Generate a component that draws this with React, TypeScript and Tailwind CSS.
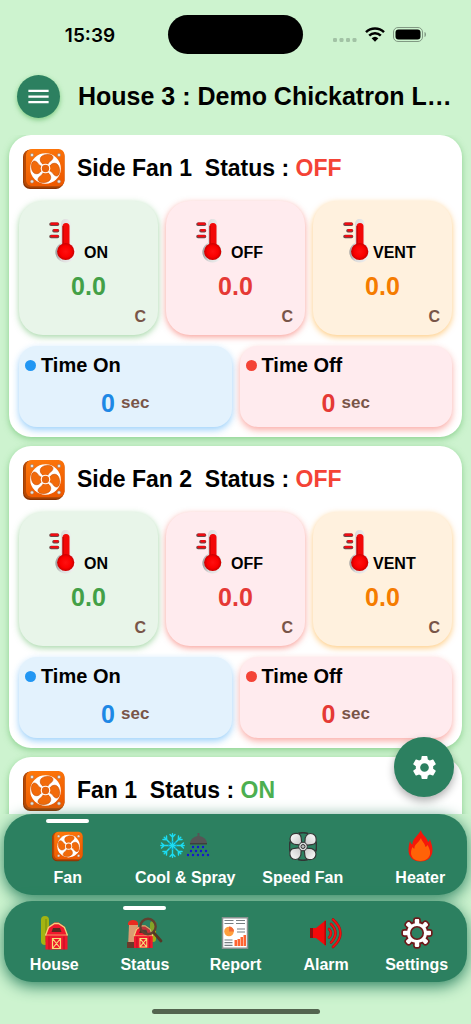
import type { ReactNode } from "react";
import { MdMenu, MdSettings } from "react-icons/md";

function FanIcon({ size }: { size: number }) {
  return (
    <svg width={size} height={size} viewBox="0 0 42 42" aria-hidden="true">
      <defs>
        <linearGradient id="fanFace" x1="0" y1="0" x2="0.3" y2="1">
          <stop offset="0" stopColor="#ff7a0c" />
          <stop offset="1" stopColor="#ee5a00" />
        </linearGradient>
      </defs>
      <rect x="0" y="2" width="40" height="39" rx="7" fill="#8a3403" />
      <rect x="0.5" y="1.5" width="41" height="38" rx="7" fill="#b84a05" />
      <rect x="3" y="1" width="38.5" height="37" rx="6" fill="url(#fanFace)" />
      <circle cx="22.5" cy="20.5" r="15.3" fill="#fff" />
      {[0, 90, 180, 270].map((deg) => (
        <path
          key={deg}
          transform={`rotate(${deg} 22.5 20.5)`}
          d="M21.500 17C17.500 15.500 16 11 18.500 8.500c2.500-2.300 8-2.800 10.500-1 2 1.800.5 4.200-1.500 5.500-1.800 1.200-2.500 2.500-3 4z"
          fill="#f26a0a"
          stroke="#c94f04"
          strokeWidth="0.7"
        />
      ))}
      <circle cx="22.5" cy="20.5" r="4.800" fill="#fff" />
      <circle cx="22.5" cy="20.5" r="3.700" fill="#e8640c" />
      {[[9, 7], [36, 7], [9, 33.5], [36, 33.5]].map(([x, y]) => (
        <circle key={`${x}-${y}`} cx={x} cy={y} r="1.700" fill="#e4e4e4" stroke="#a06a48" strokeWidth="0.500" />
      ))}
    </svg>
  );
}

function ThermometerIcon() {
  return (
    <svg width="27" height="44" viewBox="0 0 27 44" aria-hidden="true">
      <defs>
        <radialGradient id="bulb">
          <stop offset="0" stopColor="#ff1010" />
          <stop offset="0.650" stopColor="#fa0000" />
          <stop offset="1" stopColor="#c80000" />
        </radialGradient>
        <linearGradient id="glass">
          <stop offset="0" stopColor="#9a9a9a" />
          <stop offset="0.300" stopColor="#dcdcdc" />
          <stop offset="1" stopColor="#f4f4f4" />
        </linearGradient>
      </defs>
      <path d="M12 4.500a4.700 4.700 0 0 1 9.400 0v19.500a10.300 10.300 0 1 1-9.400 0z" fill="url(#glass)" />
      <rect x="13.500" y="4" width="7" height="27" rx="3.500" fill="#f20808" />
      <path d="M14 7v20" stroke="#b00000" strokeWidth="1" />
      <circle cx="16.700" cy="32.500" r="8.600" fill="url(#bulb)" />
      <g strokeLinecap="round">
        <path d="M2 5.200h6.500M5 11.700h3.500M2 17.500h6.500" stroke="#6b4a4a" strokeWidth="3.600" />
        <path d="M2.500 4.800h6M5.500 11.300h3M2.500 17.100h6" stroke="#f00b12" strokeWidth="2.400" />
      </g>
    </svg>
  );
}

function CoolSprayIcon() {
  const drops = [[33, 14], [38, 14], [43, 14], [31, 18], [36, 18], [41, 18], [46, 18], [28, 22], [33, 22], [38, 22], [43, 22], [48, 22]];
  return (
    <svg width="50" height="28" viewBox="0 0 50 28" aria-hidden="true">
      <g fill="none" stroke="#1bdcf2" strokeWidth="1.400" strokeLinecap="round">
        {[0, 45, 90, 135, 180, 225, 270, 315].map((deg) => (
          <path key={deg} transform={`rotate(${deg} 12.500 13.500)`} d="M12.500 13.500V1.800M10 2.500l2.500 2.800L15 2.500" />
        ))}
      </g>
      <circle cx="12.500" cy="13.500" r="3.800" fill="none" stroke="#0fa3bf" strokeWidth="1" />
      <path d="M37.500 1h2v3c4.500 1 7 3.500 7.500 7H30c.5-3.500 3-6 7.500-7z" fill="#555" />
      <path d="M30 11h17v1.500H30z" fill="#3e3e3e" />
      {drops.map(([x, y]) => (
        <circle key={`${x}-${y}`} cx={x} cy={y + 1} r="1.200" fill="#1515cf" />
      ))}
    </svg>
  );
}

function SpeedFanIcon() {
  return (
    <svg width="28" height="29" viewBox="0 0 28 29" aria-hidden="true">
      <defs>
        <linearGradient id="blade" x1="0" y1="0" x2="1" y2="1">
          <stop offset="0" stopColor="#ffffff" />
          <stop offset="1" stopColor="#c4c4c4" />
        </linearGradient>
      </defs>
      <path d="M9 1.500q5-1.500 10 0M9 27.500q5 1.500 10 0M1.200 9.500q-1.500 5 0 10M26.800 9.500q1.500 5 0 10" fill="none" stroke="#303534" strokeWidth="1.600" />
      {[0, 90, 180, 270].map((deg) => (
        <path
          key={deg}
          transform={`rotate(${deg} 14 14.500)`}
          d="M13 13.500L8.500 12.500C4.500 13 1 10.500 1 7 1 3 4 1.200 7.500 1.300c3 .1 4.500 1.700 4.700 4.700z"
          fill="url(#blade)"
          stroke="#343736"
          strokeWidth="1.200"
        />
      ))}
      <circle cx="14" cy="14.500" r="4.300" fill="#d9d9d9" stroke="#303030" strokeWidth="1" />
      <circle cx="14" cy="14.500" r="2" fill="#bbb" stroke="#333" strokeWidth="1" />
    </svg>
  );
}

function FlameIcon() {
  return (
    <svg width="25" height="32" viewBox="0 0 25 32" aria-hidden="true">
      <path
        d="M13 0c0 4 6 7 7 12 1-.5 1.500-1.500 2-3 .5 3 2.500 6 2.500 11 0 7-5 11.500-12 11.500S.5 27 .5 20.500C.5 17 1 14 2 11c.5 2 1 3 2.500 3.500C4 9 10 6 13 0z"
        fill="#f5170a"
      />
      <path
        d="M13 8c.5 3 3.500 4.500 4.500 9 .8-.5 1.500-1 2-2 1.500 3 3 5 2.500 9-.5 4-4.500 7-9.500 7S3 28 3 23c0-2.500.7-4.500 1.500-6 .5 1 1.200 1.500 2 1.500C6 14.500 11 12.500 13 8z"
        fill="#ff6207"
      />
    </svg>
  );
}

function Barn() {
  return (
    <>
      <path d="M0 14L3 4 9 0h4l6 4 3 10v13H0z" fill="#f0182d" />
      <path d="M3.500 14v13M18.500 14v13" stroke="#b80f22" strokeWidth="1" />
      <path d="M0 13L3 5l6-4h4l6 4 3 8" fill="none" stroke="#f3d27a" strokeWidth="1.300" />
      <path d="M6 9.500L7.500 5.500h7L16 9.500z" fill="#5b2a20" />
      <path d="M0 12.500h22" stroke="#f3d27a" strokeWidth="0.700" />
      <path d="M7 16h8v10H7zM7 16l8 10M15 16L7 26" fill="none" stroke="#f7df78" strokeWidth="1.200" />
    </>
  );
}

function HouseIcon() {
  return (
    <svg width="28" height="34" viewBox="0 0 28 34" aria-hidden="true">
      <rect x="1" y="0" width="8" height="29" rx="4" fill="#a3b412" />
      <path d="M6 3v23" stroke="#86990d" strokeWidth="1.500" />
      <g transform="translate(5.500 6.500)">
        <Barn />
      </g>
    </svg>
  );
}

function StatusIcon() {
  return (
    <svg width="36" height="32" viewBox="0 0 36 32" aria-hidden="true">
      <path d="M2 8h9v23H1z" fill="#dc9c72" />
      <path d="M1 6c1-4 9-4 10 0v2H1z" fill="#ea2b20" />
      <path d="M0 25h8v6H0z" fill="#6a3a2b" />
      <rect x="23" y="4" width="6" height="21" rx="3" fill="#a1b014" />
      <g transform="translate(7 8) scale(0.850)">
        <Barn />
      </g>
      <circle cx="21" cy="9.500" r="7.700" fill="#2c8060" fillOpacity="0.250" stroke="#60402f" strokeWidth="2.400" />
      <path d="M27 16l7 8" stroke="#563525" strokeWidth="2.800" strokeLinecap="round" />
    </svg>
  );
}

function ReportIcon() {
  return (
    <svg width="28" height="32" viewBox="0 0 28 32" aria-hidden="true">
      <rect x="1.500" y="0.800" width="25" height="30.400" fill="#fff" stroke="#8c9292" strokeWidth="1.500" />
      <path d="M3.500 3.500h9M3.500 6.500h9M15 3.500h9M15 6.500h9M16 12h8M16 15h8M3.500 23h8M3.500 25.700h8M3.500 28.400h8" stroke="#777f82" strokeWidth="1.200" />
      <circle cx="8" cy="14.500" r="4.800" fill="#ff9f3d" />
      <path d="M8 14.500v-5a5 5 0 0 1 5 5z" fill="#f36b37" />
      <path d="M13.500 29v-6H16v6zM16.500 29v-7H19v7zM19.500 29v-9H22v9zM22.500 29V18H25v11z" fill="#ff6430" />
    </svg>
  );
}

function AlarmIcon() {
  return (
    <svg width="34" height="32" viewBox="0 0 34 32" aria-hidden="true">
      <path d="M1 11h6L17 3v26L7 21H1z" fill="#f40a0a" />
      <path d="M1 11h3v10H1z" fill="#8d1010" />
      <path d="M16.200 4v24" stroke="#b40808" strokeWidth="1.500" />
      <g fill="none" strokeLinecap="round">
        <path d="M20 12q4 4 0 8.500M22 7q9 9 0 18.500M24 2.500q15 13.500 0 27.500" stroke="#9b1414" strokeWidth="2.600" />
        <path d="M20 12q4 4 0 8.500M22 7q9 9 0 18.500M24 2.500q15 13.500 0 27.500" stroke="#f51010" strokeWidth="1.700" />
      </g>
    </svg>
  );
}

function CogIcon() {
  const teeth = [0, 45, 90, 135, 180, 225, 270, 315];
  return (
    <svg width="32" height="32" viewBox="0 0 32 32" aria-hidden="true">
      <g fill="#fff" stroke="#6d1b1b" strokeWidth="1.800">
        {teeth.map((deg) => (
          <rect key={deg} x="13" y="1.200" width="6" height="8" rx="2.200" transform={`rotate(${deg} 16 16)`} />
        ))}
        <circle cx="16" cy="16" r="11" />
      </g>
      {teeth.map((deg) => (
        <rect key={deg} x="13.800" y="2" width="4.400" height="8" rx="1.400" fill="#fff" transform={`rotate(${deg} 16 16)`} />
      ))}
      <circle cx="16" cy="16" r="6.200" fill="#2c8060" stroke="#6d1b1b" strokeWidth="1.600" />
    </svg>
  );
}

function StatusBar() {
  return (
    <div className="grid shrink-0 grid-cols-[1fr_135px_1fr] items-center pt-[15px]">
      <span className="pt-1 pl-3 text-center font-['Inter'] text-[19px] font-semibold">15:39</span>
      <div className="h-[39px] rounded-full bg-black" />
      <div className="flex items-center justify-end gap-2 pr-11">
        <svg width="24" height="18" viewBox="0 0 24 18" fill="#a2c2a5" aria-hidden="true">
          <rect x="0" y="12" width="4" height="4" rx="1.200" />
          <rect x="6.500" y="12" width="4" height="4" rx="1.200" />
          <rect x="13" y="12" width="4" height="4" rx="1.200" />
          <rect x="19.500" y="12" width="4" height="4" rx="1.200" />
        </svg>
        <svg width="20" height="15" viewBox="0 0 20 15" aria-hidden="true">
          <path d="M1 5.200a13 13 0 0 1 18 0M4.200 8.600a8.300 8.300 0 0 1 11.600 0" fill="none" stroke="#000" strokeWidth="2.500" />
          <path d="M10 14.800L6.600 11.300a5 5 0 0 1 6.800 0z" />
        </svg>
        <svg width="34" height="15" viewBox="0 0 34 15" aria-hidden="true">
          <rect x="0.500" y="0.500" width="29" height="14" rx="4.500" fill="none" stroke="#819983" />
          <rect x="2.500" y="2.500" width="25" height="10" rx="3" />
          <path d="M31.500 5c2 .6 2 4.400 0 5z" fill="#819983" />
        </svg>
      </div>
    </div>
  );
}

interface Reading {
  label: string;
  tile: string;
  value: string;
  gap: string;
}

const readings: Reading[] = [
  { label: "ON", tile: "bg-[#e8f5e9] shadow-[0_2px_6px_#4caf5080]", value: "text-[#43a047]", gap: "gap-2" },
  { label: "OFF", tile: "bg-[#ffebee] shadow-[0_2px_6px_#f4433680]", value: "text-[#e53935]", gap: "gap-2" },
  { label: "VENT", tile: "bg-[#fff1de] shadow-[0_2px_6px_#ff980080]", value: "text-[#f57c00]", gap: "gap-[3px]" },
];

const timers = [
  { label: "Time On", box: "bg-[#e3f2fd] shadow-[0_3px_7px_#2196f370]", dot: "bg-[#2196f3]", value: "text-[#1e88e5]" },
  { label: "Time Off", box: "bg-[#ffebee] shadow-[0_3px_7px_#f4433670]", dot: "bg-[#f44336]", value: "text-[#e53935]" },
];

interface FanCardProps {
  name: string;
  on?: boolean;
  children?: ReactNode;
}

function FanCard({ name, on = false, children }: FanCardProps) {
  return (
    <section className="min-h-[302px] rounded-[22px] bg-white px-[10px] pt-3 pb-[10px] shadow-[0_2px_6px_#4caf5080]">
      <h2 className="flex h-[43px] items-center gap-3 pl-1 text-[23px] font-bold whitespace-pre">
        <FanIcon size={42} />
        <span>
          {`${name}  Status : `}
          <span className={on ? "text-[#4caf50]" : "text-[#f44336]"}>{on ? "ON" : "OFF"}</span>
        </span>
      </h2>
      {children}
    </section>
  );
}

function FanReadings() {
  return (
    <>
      <div className="mt-[11px] grid grid-cols-3 gap-2">
        {readings.map((item) => (
          <div key={item.label} className={`h-[134px] rounded-[24px] px-3 pt-[18px] ${item.tile}`}>
            <div className={`flex items-end pl-[18px] ${item.gap}`}>
              <ThermometerIcon />
              <span className="text-base leading-5 font-bold">{item.label}</span>
            </div>
            <p className={`mt-[7px] text-center text-[25px] leading-8 font-bold ${item.value}`}>0.0</p>
            <p className="mt-[3px] text-right text-base leading-6 font-bold text-[#795548]">C</p>
          </div>
        ))}
      </div>
      <div className="mt-[11px] grid grid-cols-2 gap-2">
        {timers.map((item) => (
          <div key={item.label} className={`h-[81px] rounded-[18px] px-[6px] pt-[3px] ${item.box}`}>
            <div className="flex items-center gap-[5px] text-xl leading-8 font-bold">
              <span className={`size-[11px] rounded-full ${item.dot}`} />
              {item.label}
            </div>
            <p className="mt-[6px] flex items-center justify-center gap-[6px] leading-8 font-bold">
              <span className={`text-[25px] ${item.value}`}>0</span>
              <span className="text-[17px] text-[#795548]">sec</span>
            </p>
          </div>
        ))}
      </div>
    </>
  );
}

function NavItem({ label, icon, active }: { label: string; icon: ReactNode; active?: boolean }) {
  return (
    <button
      type="button"
      aria-current={active ? "page" : undefined}
      className="flex h-[81px] flex-col items-center pt-[5px] text-base font-bold whitespace-nowrap text-white"
    >
      <span className={`h-1 w-[43px] rounded-full ${active ? "bg-white" : ""}`} />
      <span className="mt-1 flex h-[38px] items-center">{icon}</span>
      <span className="leading-[26px]">{label}</span>
    </button>
  );
}

export default function App() {
  return (
    <div className="flex h-screen flex-col overflow-hidden bg-[#cdf3cf] font-['Liberation_Sans',sans-serif] text-black">
      <StatusBar />
      <header className="flex shrink-0 items-center gap-[18px] px-[17px] pt-[21px] pb-[17px]">
        <button
          type="button"
          aria-label="Open menu"
          className="flex size-[43px] shrink-0 items-center justify-center rounded-full bg-[#2c8060] text-white shadow-[0_2px_5px_#4caf5099]"
        >
          <MdMenu size={27} />
        </button>
        <h1 className="text-[25px] font-bold whitespace-nowrap">House 3 : Demo Chickatron L…</h1>
      </header>

      <main className="flex min-h-0 flex-1 flex-col gap-[9px] overflow-hidden px-[9px] *:shrink-0">
        <FanCard name="Side Fan 1">
          <FanReadings />
        </FanCard>
        <FanCard name="Side Fan 2">
          <FanReadings />
        </FanCard>
        <FanCard name="Fan 1" on />
      </main>

      <footer className="relative flex shrink-0 flex-col gap-[6px] px-1">
        <button
          type="button"
          aria-label="Fan settings"
          className="absolute right-[17px] bottom-full mb-[17px] flex size-[60px] items-center justify-center rounded-full bg-[#2c8060] text-white shadow-[0_4px_8px_#00000050]"
        >
          <MdSettings size={29} />
        </button>
        <nav aria-label="Equipment" className="rounded-[28px] bg-[#2c8060] pl-[5px] shadow-[0_4px_16px_#2c8060]">
          <div className="-mr-3 grid grid-cols-4">
            <NavItem label="Fan" icon={<FanIcon size={31} />} active />
            <NavItem label="Cool & Spray" icon={<CoolSprayIcon />} />
            <NavItem label="Speed Fan" icon={<SpeedFanIcon />} />
            <NavItem label="Heater" icon={<FlameIcon />} />
          </div>
        </nav>
        <nav aria-label="Main" className="grid grid-cols-5 rounded-[28px] bg-[#2c8060] px-[5px] shadow-[0_4px_16px_#2c8060]">
          <NavItem label="House" icon={<HouseIcon />} />
          <NavItem label="Status" icon={<StatusIcon />} active />
          <NavItem label="Report" icon={<ReportIcon />} />
          <NavItem label="Alarm" icon={<AlarmIcon />} />
          <NavItem label="Settings" icon={<CogIcon />} />
        </nav>
        <div className="mx-auto mt-[21px] mb-[10px] h-[5px] w-[168px] rounded-full bg-[#53654f]" />
      </footer>
    </div>
  );
}
